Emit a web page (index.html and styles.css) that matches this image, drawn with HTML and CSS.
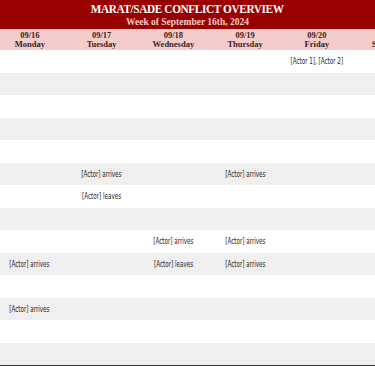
FILE: index.html
```html
<!DOCTYPE html>
<html>
<head>
<meta charset="utf-8">
<link rel="stylesheet" href="styles.css">
</head>
<body>
<div class="page">
  <header class="banner">
    <h1 class="title">MARAT/SADE CONFLICT OVERVIEW</h1>
    <div class="subtitle">Week of September 16th, 2024</div>
  </header>
  <div class="grid">
    <div class="row days">
      <div class="cell"><span>09/16</span><span>Monday</span></div>
      <div class="cell"><span>09/17</span><span>Tuesday</span></div>
      <div class="cell"><span>09/18</span><span>Wednesday</span></div>
      <div class="cell"><span>09/19</span><span>Thursday</span></div>
      <div class="cell"><span>09/20</span><span>Friday</span></div>
      <div class="cell"><span>09/21</span><span>Saturday</span></div>
    </div>
    <div class="row"><div class="cell"></div><div class="cell"></div><div class="cell"></div><div class="cell"></div><div class="cell"><span class="note">[Actor 1], [Actor 2]</span></div><div class="cell"></div></div>
    <div class="row alt"><div class="cell"></div><div class="cell"></div><div class="cell"></div><div class="cell"></div><div class="cell"></div><div class="cell"></div></div>
    <div class="row"><div class="cell"></div><div class="cell"></div><div class="cell"></div><div class="cell"></div><div class="cell"></div><div class="cell"></div></div>
    <div class="row alt"><div class="cell"></div><div class="cell"></div><div class="cell"></div><div class="cell"></div><div class="cell"></div><div class="cell"></div></div>
    <div class="row"><div class="cell"></div><div class="cell"></div><div class="cell"></div><div class="cell"></div><div class="cell"></div><div class="cell"></div></div>
    <div class="row alt"><div class="cell"></div><div class="cell"><span class="note">[Actor] arrives</span></div><div class="cell"></div><div class="cell"><span class="note">[Actor] arrives</span></div><div class="cell"></div><div class="cell"></div></div>
    <div class="row"><div class="cell"></div><div class="cell"><span class="note">[Actor] leaves</span></div><div class="cell"></div><div class="cell"></div><div class="cell"></div><div class="cell"></div></div>
    <div class="row alt"><div class="cell"></div><div class="cell"></div><div class="cell"></div><div class="cell"></div><div class="cell"></div><div class="cell"></div></div>
    <div class="row"><div class="cell"></div><div class="cell"></div><div class="cell"><span class="note">[Actor] arrives</span></div><div class="cell"><span class="note">[Actor] arrives</span></div><div class="cell"></div><div class="cell"></div></div>
    <div class="row alt"><div class="cell"><span class="note">[Actor] arrives</span></div><div class="cell"></div><div class="cell"><span class="note">[Actor] leaves</span></div><div class="cell"><span class="note">[Actor] arrives</span></div><div class="cell"></div><div class="cell"></div></div>
    <div class="row"><div class="cell"></div><div class="cell"></div><div class="cell"></div><div class="cell"></div><div class="cell"></div><div class="cell"></div></div>
    <div class="row alt"><div class="cell"><span class="note">[Actor] arrives</span></div><div class="cell"></div><div class="cell"></div><div class="cell"></div><div class="cell"></div><div class="cell"></div></div>
    <div class="row"><div class="cell"></div><div class="cell"></div><div class="cell"></div><div class="cell"></div><div class="cell"></div><div class="cell"></div></div>
    <div class="row alt"><div class="cell"></div><div class="cell"></div><div class="cell"></div><div class="cell"></div><div class="cell"></div><div class="cell"></div></div>
  </div>
  <div class="bottom-rule"></div>
</div>
</body>
</html>
```

FILE: styles.css
```css
html, body {
  margin: 0;
  padding: 0;
  background: #ffffff;
  overflow: hidden;
}

.page {
  width: 375px;
  height: 366px;
  overflow: hidden;
  display: flex;
  flex-direction: column;
}

.banner {
  background: #990000;
  height: 29px;
  display: flex;
  flex-direction: column;
  align-items: center;
  justify-content: flex-start;
  flex-shrink: 0;
}

.title {
  margin: 0;
  padding-top: 2px;
  font-family: "Liberation Serif", serif;
  font-weight: bold;
  font-size: 12.5px;
  line-height: 14px;
  letter-spacing: -0.4px;
  color: #ffffff;
  white-space: nowrap;
  transform: scaleX(0.9);
}

.subtitle {
  padding-top: 1px;
  font-family: "Liberation Serif", serif;
  font-weight: bold;
  font-size: 9.5px;
  line-height: 11px;
  color: #f4cccc;
  white-space: nowrap;
}

.grid {
  margin-left: -6px;
  display: flex;
  flex-direction: column;
  flex-shrink: 0;
}

.row {
  display: grid;
  grid-template-columns: repeat(6, 71.75px);
  height: 22.5px;
  background: #ffffff;
}

.row.alt {
  background: #efefef;
}

.cell {
  display: flex;
  align-items: center;
  justify-content: center;
  font-family: "DejaVu Sans", "Liberation Sans", sans-serif;
  font-size: 8.5px;
  color: #222222;
  white-space: nowrap;
}

.note {
  display: inline-block;
  transform: scaleX(0.66);
}

.row.days {
  height: 21px;
  background: #f4cccc;
}

.row.days .cell {
  flex-direction: column;
  font-family: "Liberation Serif", serif;
  font-weight: bold;
  font-size: 8.5px;
  line-height: 8.7px;
  padding-top: 1px;
  color: #3b1f1f;
}

.bottom-rule {
  height: 2px;
  background: #333333;
  flex-shrink: 0;
}
```
